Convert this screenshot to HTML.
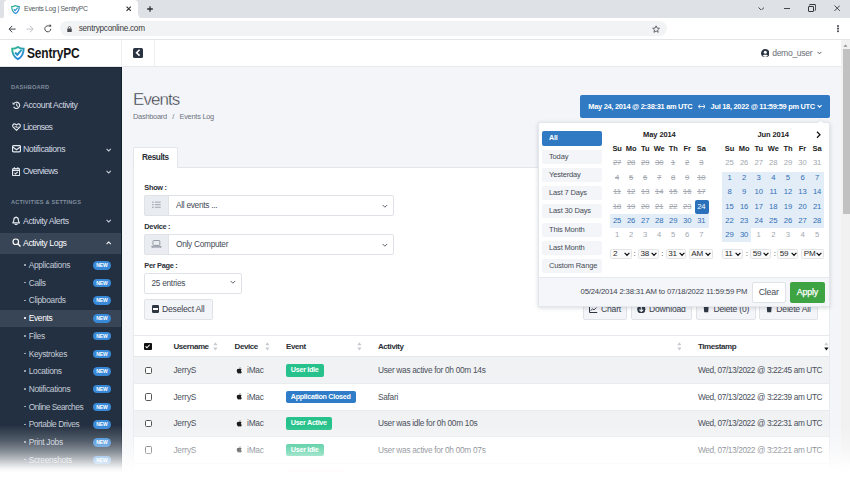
<!DOCTYPE html>
<html><head><meta charset="utf-8"><title>Events Log | SentryPC</title>
<style>
*{box-sizing:border-box;margin:0;padding:0}
html,body{width:850px;height:478px;overflow:hidden;background:#f4f5f8;font-family:"Liberation Sans",Arial,sans-serif;color:#333;}
.a{position:absolute;white-space:nowrap;line-height:1}
#tabs{left:0;top:0;width:850px;height:18px;background:#dee1e6}
#tab{left:4px;top:0;width:134px;height:18px;background:#fff;border-radius:4px 4px 0 0}
#tool{left:0;top:18px;width:850px;height:22px;background:#fff;border-bottom:1px solid #e4e5e7}
#url{left:60px;top:21.300px;width:606.500px;height:14.700px;border-radius:8px;background:#f1f3f4}
#hdr{left:0;top:40px;width:841px;height:27px;background:#fff;border-bottom:1px solid #e6e8ec}
#side{left:0;top:67px;width:121.700px;height:411px;background:#233041;border-right:1px solid #131e2d;border-top:1px solid #182433}
#sb{left:841px;top:40px;width:9px;height:439px;background:#f1f1f1}
#sbt{left:842.600px;top:49px;width:8px;height:165px;background:#c1c1c1}
.sec{font-size:5.6px;font-weight:bold;color:#7f8c9d;letter-spacing:.2px;left:11px;margin-top:.7px}
.mi{font-size:8.7px;color:#d3dae3;left:23px;letter-spacing:-.4px}
.si{font-size:8.4px;color:#c3ccd7;left:28.700px;letter-spacing:-.31px}
.dot{left:24px;margin-top:.300px;width:1.500px;height:1.500px;border-radius:50%;background:#aeb8c4}
.new{left:93px;width:18px;height:8.5px;border-radius:5px;background:#3889d8;color:#fff;font-size:5px;font-weight:bold;text-align:center;line-height:8.5px;letter-spacing:-.1px}
.chev{left:106.5px;width:5px;height:5px}

.lbl{left:144.300px;font-size:7.4px;font-weight:bold;color:#2b2f36;letter-spacing:-.3px;margin-top:.9px}
.sel{background:#fff;border:1px solid #dfe3e8;border-radius:2px}
.pre{width:25.400px;background:#e9ecf1;border:1px solid #dfe3e8;border-radius:2px 0 0 2px}
.st{font-size:8.3px;color:#444b57;letter-spacing:-.28px}
.btn{background:#f4f5f8;border:1px solid #dfe3e8;border-radius:2px}
.bt{font-size:8.6px;color:#3c4350;letter-spacing:-.2px}
.row{left:134px;width:694.500px;height:26.200px;background:#f1f2f3}
.th{font-size:8px;font-weight:bold;color:#2b2f36;letter-spacing:-.43px;margin-top:.5px}
.td{font-size:8.3px;color:#4a505c;letter-spacing:-.2px}
.cb{left:144.500px;width:7.500px;height:7.500px;border:1px solid #555;border-radius:1.600px;background:#fff}
.bdg{height:12.400px;border-radius:2px;color:#fff;font-size:7.2px;font-weight:bold;line-height:12.400px;text-align:center;letter-spacing:-.3px}

.dbt{font-size:7.4px;font-weight:bold;color:#fff;letter-spacing:-.27px}
.rg{left:542.400px;width:59.900px;height:14px;background:#f4f5f8;border-radius:2px;font-size:7.5px;color:#444b57;line-height:14px;padding-left:6.600px;letter-spacing:-.15px}
.cth{font-size:7.5px;font-weight:bold;color:#222;text-align:center;letter-spacing:-.1px}
.cd{font-size:7.7px;text-align:center;letter-spacing:-.1px}
.d{color:#a3a8b0;text-decoration:line-through}
.off{color:#a3a8b0}
.in{color:#2f6fb5}
.act{color:#fff}
.ts{height:10.300px;border:1px solid #e2e4e8;border-radius:1.500px;background:#fafafa;margin-top:-.500px}
.tst{font-size:8.100px;color:#2a2a2a;letter-spacing:-.3px;margin-top:-.200px}
.tm{letter-spacing:-.4px}
.ac{letter-spacing:-.29px}
</style></head><body>
<div class="a" id="tabs"></div>
<div class="a" id="tab"></div>
<div class="a" id="tool"></div>
<div class="a" id="url"></div>
<div class="a" style="left:24.1px;top:5.5px;font-size:6.9px;color:#54585d;letter-spacing:-.28px">Events Log | SentryPC</div>
<div class="a" style="left:0.5px;top:14.5px;width:3.5px;height:3.5px;background:radial-gradient(circle at 0 0,#dee1e6 3.4px,#fff 3.6px)"></div>
<div class="a" style="left:138px;top:14.5px;width:3.5px;height:3.5px;background:radial-gradient(circle at 100% 0,#dee1e6 3.4px,#fff 3.6px)"></div>
<svg class="a" style="left:10.9px;top:5.2px" width="9" height="9" viewBox="0 0 18 18"><defs><linearGradient id="g1" x1="0" y1="0" x2="0.6" y2="1"><stop offset="0" stop-color="#2fb98a"/><stop offset="1" stop-color="#2585e0"/></linearGradient></defs><path d="M9 1.2 C6.5 3 4 3.4 1.5 3.4 C1.5 9.5 3.5 14 9 17 C14.5 14 16.5 9.500 16.5 3.4 C14 3.4 11.5 3 9 1.2 Z" fill="none" stroke="url(#g1)" stroke-width="2.4"/><path d="M5.5 8.500 L8.2 11.2 L13.5 5.2" fill="none" stroke="url(#g1)" stroke-width="2.2"/></svg>
<svg class="a" style="left:125.6px;top:6.4px" width="5.4" height="5.4" viewBox="0 0 10 10"><path d="M1 1 L9 9 M9 1 L1 9" stroke="#2c2f33" stroke-width="2.100"/></svg>
<svg class="a" style="left:146.7px;top:6px" width="6" height="6" viewBox="0 0 10 10"><path d="M5 0.300 V9.700 M0.300 5 H9.700" stroke="#2c2f33" stroke-width="2.100"/></svg>
<svg class="a" style="left:8.100px;top:24.600px" width="8.200" height="8.200" viewBox="0 0 14 14"><path d="M7.200 1.500 L1.800 7 L7.200 12.500 M2 7 H13" stroke="#3f4347" stroke-width="1.700" fill="none"/></svg>
<svg class="a" style="left:26.100px;top:24.600px" width="8.200" height="8.200" viewBox="0 0 14 14"><path d="M6.800 1.500 L12.200 7 L6.800 12.500 M12 7 H1" stroke="#c0c2c6" stroke-width="1.700" fill="none"/></svg>
<svg class="a" style="left:43px;top:23.900px" width="9.600" height="9.600" viewBox="0 0 16 16"><path d="M13 8 A5 5 0 1 1 11.200 4.200" stroke="#3f4347" stroke-width="1.600" fill="none"/><path d="M9.300 1.200 H13.600 V5.500 Z" fill="#3f4347"/></svg>
<svg class="a" style="left:67.200px;top:25.800px" width="5" height="6" viewBox="0 0 10 12"><rect x="0.500" y="5" width="9" height="7" rx="1" fill="#4a4e53"/><path d="M2.600 5.500 V3.500 A2.400 2.400 0 0 1 7.400 3.500 V5.500" stroke="#4a4e53" stroke-width="1.500" fill="none"/></svg>

<div class="a" style="left:78.7px;top:24.4px;font-size:8.2px;color:#3a3d41;letter-spacing:-.25px;top:24.9px">sentrypconline.com</div>
<div class="a" id="hdr"></div>
<div class="a" id="sb"></div><div class="a" id="sbt"></div>
<div class="a" style="left:121px;top:39px;width:1px;height:28px;background:#eceef1"></div>
<div class="a" style="left:154px;top:39px;width:1px;height:28px;background:#eceef1"></div>
<div class="a" style="left:26.600px;top:46.500px;font-size:13.9px;font-weight:bold;color:#161616;letter-spacing:-.2px;transform:scaleX(.86);transform-origin:0 0">SentryPC</div>
<svg class="a" style="left:10.900px;top:46.300px" width="13.8" height="14" viewBox="0 0 18 18"><path d="M9 1.200 C6.500 3 4 3.400 1.500 3.400 C1.500 9.500 3.500 14 9 17 C14.500 14 16.500 9.500 16.500 3.400 C14 3.400 11.500 3 9 1.200 Z" fill="none" stroke="url(#g1)" stroke-width="2.500"/><path d="M5.300 8.300 L8.200 11.200 L13.700 5" fill="none" stroke="url(#g1)" stroke-width="2.600"/></svg>
<div class="a" style="left:133.100px;top:48.400px;width:10px;height:9.400px;background:#2a3341;border-radius:1.500px"></div>
<svg class="a" style="left:135px;top:49.400px" width="5.600" height="7.400" viewBox="0 0 10 13"><path d="M8.200 1.200 L2.800 6.500 L8.200 11.800" stroke="#fff" stroke-width="2.800" fill="none"/></svg>

<div class="a" style="left:772.2px;top:48.6px;font-size:8.6px;color:#6b7078;letter-spacing:-.32px">demo_user</div>
<svg class="a" style="left:760.8px;top:48.6px" width="8.600" height="8.600" viewBox="0 0 20 20"><circle cx="10" cy="10" r="10" fill="#2a3341"/><circle cx="10" cy="7.600" r="3.500" fill="#fff"/><path d="M3.800 15.800 C5 12.200 15 12.200 16.200 15.800 C13.500 18.800 6.500 18.800 3.800 15.800 Z" fill="#fff"/></svg>
<svg class="a" style="left:816.600px;top:51.200px" width="5" height="4" viewBox="0 0 9 7"><path d="M1 1.500 L4.500 5 L8 1.500" stroke="#555b66" stroke-width="1.800" fill="none"/></svg>
<svg class="a" style="left:757.800px;top:6.700px" width="6.600" height="3.800" viewBox="0 0 13 7.500"><path d="M1 1 L6.500 6.300 L12 1" stroke="#33373c" stroke-width="1.800" fill="none"/></svg>
<div class="a" style="left:783.800px;top:8px;width:6.200px;height:1px;background:#45494e"></div>
<div class="a" style="left:808.200px;top:6.400px;width:5.600px;height:5.600px;border:1px solid #33373c;border-radius:1px;box-shadow:1.200px -1.200px 0 -0.100px #dee1e6, 1.500px -1.500px 0 0.400px #33373c"></div>
<svg class="a" style="left:833.800px;top:5.400px" width="6.400" height="6.400" viewBox="0 0 10 10"><path d="M0.800 0.800 L9.200 9.200 M9.200 0.800 L0.800 9.200" stroke="#33373c" stroke-width="1.400"/></svg>
<svg class="a" style="left:652.400px;top:24.800px" width="8.200" height="8.200" viewBox="0 0 24 24"><path d="M12 2.500 L14.900 9 L22 9.700 L16.600 14.400 L18.200 21.400 L12 17.700 L5.800 21.400 L7.400 14.400 L2 9.700 L9.100 9 Z" fill="none" stroke="#45494e" stroke-width="2.300" stroke-linejoin="round"/></svg>
<div class="a" style="left:836.800px;top:25.400px;width:1.800px;height:1.800px;border-radius:50%;background:#45494e;box-shadow:0 2.600px 0 #45494e,0 5.200px 0 #45494e"></div>
<svg class="a" style="left:843px;top:43.500px" width="5" height="3" viewBox="0 0 10 6"><path d="M1 5.500 L5 1 L9 5.500 Z" fill="#8a8a8a"/></svg>

<div class="a" id="side"></div>

<div class="a sec" style="top:84px">DASHBOARD</div>
<div class="a mi" style="top:101px">Account Activity</div>
<div class="a mi" style="top:123px;letter-spacing:-.62px">Licenses</div>
<div class="a mi" style="top:145px">Notifications</div>
<div class="a mi" style="top:167px;letter-spacing:-.68px">Overviews</div>
<div class="a sec" style="top:199.5px">ACTIVITIES &amp; SETTINGS</div>
<div class="a mi" style="top:216.5px">Activity Alerts</div>
<div class="a" style="left:0;top:232.5px;width:121px;height:21px;background:#384556"></div>
<div class="a mi" style="top:238.5px;color:#fff">Activity Logs</div>
<div class="a" style="left:0;top:309.5px;width:121px;height:17px;background:#384556"></div>

<div class="a si" style="top:261px">Applications</div><div class="a dot" style="top:264px"></div><div class="a new" style="top:261px">NEW</div>
<div class="a si" style="top:278.7px">Calls</div><div class="a dot" style="top:281.7px"></div><div class="a new" style="top:278.7px">NEW</div>
<div class="a si" style="top:296.4px">Clipboards</div><div class="a dot" style="top:299.4px"></div><div class="a new" style="top:296.4px">NEW</div>
<div class="a si" style="top:314.1px;color:#fff">Events</div><div class="a dot" style="top:317.1px;background:#fff"></div><div class="a new" style="top:314.1px">NEW</div>
<div class="a si" style="top:331.8px">Files</div><div class="a dot" style="top:334.8px"></div><div class="a new" style="top:331.8px">NEW</div>
<div class="a si" style="top:349.5px">Keystrokes</div><div class="a dot" style="top:352.5px"></div><div class="a new" style="top:349.5px">NEW</div>
<div class="a si" style="top:367.2px">Locations</div><div class="a dot" style="top:370.2px"></div><div class="a new" style="top:367.2px">NEW</div>
<div class="a si" style="top:384.9px">Notifications</div><div class="a dot" style="top:387.9px"></div><div class="a new" style="top:384.9px">NEW</div>
<div class="a si" style="top:402.6px;letter-spacing:-.5px">Online Searches</div><div class="a dot" style="top:405.6px"></div><div class="a new" style="top:402.6px">NEW</div>
<div class="a si" style="top:420.3px;letter-spacing:-.45px">Portable Drives</div><div class="a dot" style="top:423.3px"></div><div class="a new" style="top:420.3px">NEW</div>
<div class="a si" style="top:438px">Print Jobs</div><div class="a dot" style="top:441px"></div><div class="a new" style="top:438px">NEW</div>
<div class="a si" style="top:455.7px">Screenshots</div><div class="a dot" style="top:458.7px"></div><div class="a new" style="top:455.7px">NEW</div>


<!-- SIDE ICONS -->
<svg class="a" style="left:11.500px;top:100.800px" width="9" height="8.600" viewBox="0 0 18 17"><path d="M3.600 5.200 A6.300 6.300 0 1 1 3.200 11.200" stroke="#e4e9ef" stroke-width="2.28" fill="none"/><path d="M0.800 2.200 L1.600 7.400 L6.600 6.200 Z" fill="#e4e9ef"/><path d="M9.400 4.800 V9 L12 11" stroke="#e4e9ef" stroke-width="2.04" fill="none"/></svg>
<svg class="a" style="left:11.600px;top:122.800px" width="9" height="8" viewBox="0 0 18 16"><path d="M9 14.600 L2.400 8.200 C-0.300 5.200 3 0.200 7 2.400 L9 4 L11 2.400 C15 0.200 18.300 5.200 15.600 8.200 Z" stroke="#e4e9ef" stroke-width="2.28" fill="none" stroke-linejoin="round"/><path d="M4.500 8 H7 L8.200 6 L9.800 9.800 L11 8 H13.500" stroke="#e4e9ef" stroke-width="1.56" fill="none"/></svg>
<svg class="a" style="left:11.600px;top:145.400px" width="9" height="7.400" viewBox="0 0 18 15"><rect x="1" y="1.200" width="16" height="12.600" rx="2" stroke="#e4e9ef" stroke-width="2.40" fill="none"/><path d="M1.500 4 L9 9.600 L16.500 4" stroke="#e4e9ef" stroke-width="2.28" fill="none"/></svg>
<svg class="a" style="left:12px;top:166.800px" width="8.200" height="9.200" viewBox="0 0 16 18"><rect x="1" y="3" width="14" height="14" rx="2" stroke="#e4e9ef" stroke-width="2.40" fill="none"/><path d="M1 6.600 H15" stroke="#e4e9ef" stroke-width="2.64"/><path d="M4.600 0.500 V4 M11.400 0.500 V4" stroke="#e4e9ef" stroke-width="2.40"/><path d="M4.800 11.400 L7 13.600 L11.200 9.400" stroke="#e4e9ef" stroke-width="2.04" fill="none"/></svg>
<svg class="a" style="left:12px;top:215.800px" width="8.200" height="9.400" viewBox="0 0 16 18"><path d="M8 1 V2.500 M8 2.500 C4.500 2.500 3.600 5.200 3.600 7.600 C3.600 10.600 2.600 11.600 1.400 13.200 H14.600 C13.400 11.600 12.400 10.600 12.400 7.600 C12.400 5.200 11.500 2.500 8 2.500 Z" stroke="#e4e9ef" stroke-width="2.28" fill="none" stroke-linejoin="round"/><path d="M6 15 A2 2 0 0 0 10 15" stroke="#e4e9ef" stroke-width="2.16" fill="none"/></svg>
<svg class="a" style="left:11.600px;top:238px" width="9.200" height="9.200" viewBox="0 0 18 18"><circle cx="7.400" cy="7.400" r="5.400" stroke="#fff" stroke-width="2.300" fill="none"/><path d="M11.400 11.400 L16.600 16.600" stroke="#fff" stroke-width="2.600"/></svg>
<svg class="a" style="left:106.300px;top:147.6px" width="5.400" height="4" viewBox="0 0 9 6.500"><path d="M1 1.500 L4.500 5 L8 1.500" stroke="#c9d1db" stroke-width="1.900" fill="none"/></svg>
<svg class="a" style="left:106.300px;top:169.6px" width="5.400" height="4" viewBox="0 0 9 6.500"><path d="M1 1.500 L4.500 5 L8 1.500" stroke="#c9d1db" stroke-width="1.900" fill="none"/></svg>
<svg class="a" style="left:106.300px;top:218.8px" width="5.400" height="4" viewBox="0 0 9 6.500"><path d="M1 1.500 L4.500 5 L8 1.500" stroke="#c9d1db" stroke-width="1.900" fill="none"/></svg>
<svg class="a" style="left:106.300px;top:241px" width="5.400" height="4" viewBox="0 0 9 6.500"><path d="M1 5 L4.500 1.500 L8 5" stroke="#fff" stroke-width="1.700" fill="none"/></svg>
<!-- MAIN -->
<div class="a" style="left:133px;top:91px;font-size:17px;color:#2c313b;letter-spacing:-.95px;-webkit-text-stroke:.4px #f4f5f8">Events</div>
<div class="a" style="left:133px;top:113px;font-size:7.4px;color:#6c7380;letter-spacing:-.25px">Dashboard</div>
<div class="a" style="left:172.300px;top:113px;font-size:7.4px;color:#6c7380">/</div>
<div class="a" style="left:179.500px;top:113px;font-size:7.4px;color:#6c7380;letter-spacing:-.25px">Events Log</div>


<!-- TAB + CARD -->
<div class="a" style="left:133px;top:167.300px;width:696.500px;height:320px;background:#fff;border:1px solid #e9ebef;border-top:1px solid #e3e6ea"></div>
<div class="a" style="left:133px;top:146.500px;width:45px;height:21.800px;background:#fff;border:1px solid #e3e6ea;border-bottom:none;border-radius:2px 2px 0 0"></div>
<div class="a" style="left:142px;top:154px;font-size:8.2px;font-weight:bold;color:#2b2f36;letter-spacing:-.4px">Results</div>

<div class="a lbl" style="top:183px">Show :</div>
<div class="a sel" style="left:144px;top:195px;width:250px;height:20.5px"></div>
<div class="a pre" style="left:144px;top:195px;height:20.5px"></div>
<div class="a st" style="left:176px;top:201px">All events ...</div>
<div class="a lbl" style="top:222px">Device :</div>
<div class="a sel" style="left:144px;top:234px;width:250px;height:20.5px"></div>
<div class="a pre" style="left:144px;top:234px;height:20.5px"></div>
<div class="a st" style="left:176px;top:240px">Only Computer</div>
<div class="a lbl" style="top:261px">Per Page :</div>
<div class="a sel" style="left:144px;top:273px;width:97.5px;height:20.5px"></div>
<div class="a st" style="left:151.5px;top:279px">25 entries</div>
<div class="a btn" style="left:144px;top:299px;width:68.5px;height:20.5px"></div>
<div class="a" style="left:162px;top:305px;font-size:8.6px;color:#3c4350;letter-spacing:-.2px">Deselect All</div>
<div class="a" style="left:151.800px;top:305.400px;width:7.600px;height:7.400px;background:#2f3744;border-radius:1.200px"></div>
<div class="a" style="left:153.200px;top:308.300px;width:4.800px;height:1.600px;background:#fff"></div>


<svg class="a" style="left:152px;top:201.400px" width="9.200" height="7.400" viewBox="0 0 18 14"><path d="M5.600 2 H17 M5.600 7 H17 M5.600 12 H17" stroke="#858c98" stroke-width="1.500"/><circle cx="1.800" cy="2" r="1.300" fill="#858c98"/><circle cx="1.800" cy="7" r="1.300" fill="#858c98"/><circle cx="1.800" cy="12" r="1.300" fill="#858c98"/></svg>
<svg class="a" style="left:151.400px;top:239.800px" width="10.800" height="8.400" viewBox="0 0 22 17"><rect x="4" y="1" width="14" height="10" rx="1.500" stroke="#858c98" stroke-width="1.700" fill="none"/><path d="M1.200 13 H20.800 C20.800 15 19.500 16 18 16 H4 C2.500 16 1.200 15 1.200 13 Z" stroke="#858c98" stroke-width="1.600" fill="none" stroke-linejoin="round"/></svg>
<svg class="a" style="left:381.800px;top:203.600px" width="5.800" height="4.200" viewBox="0 0 9 6.500"><path d="M1 1.500 L4.500 5 L8 1.500" stroke="#5a616d" stroke-width="1.500" fill="none"/></svg>
<svg class="a" style="left:381.800px;top:242.600px" width="5.800" height="4.200" viewBox="0 0 9 6.500"><path d="M1 1.500 L4.500 5 L8 1.500" stroke="#5a616d" stroke-width="1.500" fill="none"/></svg>
<svg class="a" style="left:230.300px;top:280.400px" width="5.800" height="4.200" viewBox="0 0 9 6.500"><path d="M1 1.500 L4.500 5 L8 1.500" stroke="#5a616d" stroke-width="1.500" fill="none"/></svg>
<!-- action buttons behind popup -->
<div class="a btn" style="left:582.600px;top:299px;width:44.700px;height:20.500px"></div>
<div class="a bt" style="left:601px;top:305px">Chart</div>
<svg class="a" style="left:589px;top:305.500px" width="8.500" height="7" viewBox="0 0 17 14"><path d="M1 0.500 V13 H16.500" stroke="#2f3744" stroke-width="2" fill="none"/><path d="M3.500 9.500 L7 5.500 L10 8 L15 3" stroke="#2f3744" stroke-width="1.800" fill="none"/></svg>
<div class="a btn" style="left:630.600px;top:299px;width:61.600px;height:20.500px"></div>
<div class="a bt" style="left:649px;top:305px">Download</div>
<svg class="a" style="left:637px;top:304.800px" width="8.600" height="8.600" viewBox="0 0 18 18"><circle cx="9" cy="9" r="8.500" fill="#2f3744"/><path d="M9 4 V13 M5 9.500 L9 13.500 L13 9.500" stroke="#f4f5f8" stroke-width="2.200" fill="none"/></svg>
<div class="a btn" style="left:696px;top:299px;width:60px;height:20.500px"></div>
<div class="a bt" style="left:713.400px;top:305px">Delete (0)</div>
<svg class="a" style="left:703px;top:305px" width="6.400" height="7.600" viewBox="0 0 13 15"><path d="M0.500 2.200 H12.500 M4.500 0.800 H8.500" stroke="#2f3744" stroke-width="1.600"/><path d="M1.600 4 H11.400 L10.600 14.500 H2.400 Z" fill="#2f3744"/></svg>
<div class="a btn" style="left:758.900px;top:299px;width:58.800px;height:20.500px"></div>
<div class="a bt" style="left:776.300px;top:305px">Delete All</div>
<svg class="a" style="left:766px;top:305px" width="6.400" height="7.600" viewBox="0 0 13 15"><path d="M0.500 2.200 H12.500 M4.500 0.800 H8.500" stroke="#2f3744" stroke-width="1.600"/><path d="M1.600 4 H11.400 L10.600 14.500 H2.400 Z" fill="#2f3744"/></svg>

<!-- TABLE -->
<div class="a" style="left:133px;top:334.800px;width:696px;height:1px;background:#e6e9ed"></div>
<div class="a row" style="top:357.400px"></div>
<div class="a row" style="top:410.300px"></div>
<div class="a" style="left:133px;top:356.400px;width:696px;height:1px;background:#e4e7eb"></div>
<div class="a" style="left:133px;top:383.400px;width:696px;height:1px;background:#e9ecef"></div>
<div class="a" style="left:133px;top:409.800px;width:696px;height:1px;background:#e9ecef"></div>
<div class="a" style="left:133px;top:436.300px;width:696px;height:1px;background:#e9ecef"></div>
<div class="a" style="left:133px;top:462.700px;width:696px;height:1px;background:#e9ecef"></div>

<div class="a th" style="left:173.400px;top:342.700px">Username</div>
<div class="a th" style="left:234.600px;top:342.700px">Device</div>
<div class="a th" style="left:286px;top:342.700px">Event</div>
<div class="a th" style="left:378px;top:342.700px">Activity</div>
<div class="a th" style="left:698px;top:342.700px">Timestamp</div>
<div class="a cb" style="top:366.7px"></div>
<div class="a td" style="left:173.400px;top:366.4px">JerryS</div>
<div class="a td" style="left:247px;top:366.4px">iMac</div>
<div class="a bdg" style="left:285.600px;top:364.4px;width:38.2px;background:#27c28b">User Idle</div>
<div class="a td ac" style="left:378px;top:366.4px">User was active for 0h 00m 14s</div>
<div class="a td tm" style="left:698px;top:366.4px">Wed, 07/13/2022 @ 3:22:45 am UTC</div>
<div class="a cb" style="top:393.1px"></div>
<div class="a td" style="left:173.400px;top:392.9px">JerryS</div>
<div class="a td" style="left:247px;top:392.9px">iMac</div>
<div class="a bdg" style="left:285.600px;top:390.8px;width:70.1px;background:#2f7cc8">Application Closed</div>
<div class="a td ac" style="left:378px;top:392.9px">Safari</div>
<div class="a td tm" style="left:698px;top:392.9px">Wed, 07/13/2022 @ 3:22:39 am UTC</div>
<div class="a cb" style="top:419.6px"></div>
<div class="a td" style="left:173.400px;top:419.3px">JerryS</div>
<div class="a td" style="left:247px;top:419.3px">iMac</div>
<div class="a bdg" style="left:285.600px;top:417.3px;width:46.4px;background:#27c28b">User Active</div>
<div class="a td ac" style="left:378px;top:419.3px">User was idle for 0h 00m 10s</div>
<div class="a td tm" style="left:698px;top:419.3px">Wed, 07/13/2022 @ 3:22:31 am UTC</div>
<div class="a cb" style="top:446.1px"></div>
<div class="a td" style="left:173.400px;top:445.8px">JerryS</div>
<div class="a td" style="left:247px;top:445.8px">iMac</div>
<div class="a bdg" style="left:285.600px;top:443.8px;width:38.2px;background:#27c28b">User Idle</div>
<div class="a td ac" style="left:378px;top:445.8px">User was active for 0h 00m 07s</div>
<div class="a td tm" style="left:698px;top:445.8px">Wed, 07/13/2022 @ 3:22:21 am UTC</div>
<div class="a bdg" style="left:285.600px;top:470.400px;width:60px;background:#f4694b">&nbsp;</div>

<div class="a" style="left:144.400px;top:343.100px;width:7.200px;height:7px;background:#111;border-radius:1px"></div>
<svg class="a" style="left:145.400px;top:344.300px" width="5.200" height="4.600" viewBox="0 0 10 9"><path d="M1 4.500 L3.800 7.300 L9 1.500" stroke="#fff" stroke-width="2" fill="none"/></svg>
<svg class="a" style="left:213.1px;top:342.200px" width="4.800" height="8.800" viewBox="0 0 10 18"><path d="M5 0.500 L9.500 6.500 H0.500 Z" fill="#c7cad0"/><path d="M5 17.500 L9.500 11.500 H0.500 Z" fill="#c7cad0"/></svg>
<svg class="a" style="left:264.9px;top:342.200px" width="4.800" height="8.800" viewBox="0 0 10 18"><path d="M5 0.500 L9.500 6.500 H0.500 Z" fill="#c7cad0"/><path d="M5 17.500 L9.500 11.500 H0.500 Z" fill="#c7cad0"/></svg>
<svg class="a" style="left:356.8px;top:342.200px" width="4.800" height="8.800" viewBox="0 0 10 18"><path d="M5 0.500 L9.500 6.500 H0.500 Z" fill="#c7cad0"/><path d="M5 17.500 L9.500 11.500 H0.500 Z" fill="#c7cad0"/></svg>
<svg class="a" style="left:676.6px;top:342.200px" width="4.800" height="8.800" viewBox="0 0 10 18"><path d="M5 0.500 L9.500 6.500 H0.500 Z" fill="#c7cad0"/><path d="M5 17.500 L9.500 11.500 H0.500 Z" fill="#c7cad0"/></svg>
<svg class="a" style="left:824px;top:342.200px" width="4.800" height="8.800" viewBox="0 0 10 18"><path d="M5 0.500 L9.500 6.500 H0.500 Z" fill="#c7cad0"/><path d="M5 17.500 L9.500 11.500 H0.500 Z" fill="#111"/></svg>
<svg class="a" style="left:236px;top:367.0px" width="6.400" height="6.800" viewBox="0 0 16 18"><path d="M12.700 9.600 C12.700 7.500 14.400 6.500 14.500 6.400 C13.500 5 12 4.800 11.500 4.800 C10.200 4.700 9 5.600 8.400 5.600 C7.800 5.600 6.800 4.800 5.700 4.800 C4.300 4.800 3 5.600 2.300 6.900 C0.800 9.400 1.900 13.200 3.300 15.300 C4 16.300 4.800 17.400 5.900 17.400 C7 17.400 7.400 16.700 8.700 16.700 C10 16.700 10.300 17.400 11.500 17.400 C12.600 17.400 13.400 16.400 14.100 15.300 C14.900 14.100 15.200 13 15.200 12.900 C15.200 12.900 12.700 12 12.700 9.600 Z M10.600 3.200 C11.200 2.500 11.600 1.500 11.500 0.500 C10.600 0.500 9.600 1.100 9 1.800 C8.400 2.400 7.900 3.500 8.100 4.400 C9 4.500 10 3.900 10.600 3.200 Z" fill="#1c1c1c"/></svg>
<svg class="a" style="left:236px;top:393.4px" width="6.400" height="6.800" viewBox="0 0 16 18"><path d="M12.700 9.600 C12.700 7.500 14.400 6.500 14.500 6.400 C13.500 5 12 4.800 11.500 4.800 C10.200 4.700 9 5.600 8.400 5.600 C7.800 5.600 6.800 4.800 5.700 4.800 C4.300 4.800 3 5.600 2.300 6.900 C0.800 9.400 1.900 13.200 3.300 15.300 C4 16.300 4.800 17.400 5.900 17.400 C7 17.400 7.400 16.700 8.700 16.700 C10 16.700 10.300 17.400 11.500 17.400 C12.600 17.400 13.400 16.400 14.100 15.300 C14.900 14.100 15.200 13 15.200 12.900 C15.200 12.900 12.700 12 12.700 9.600 Z M10.600 3.200 C11.200 2.500 11.600 1.500 11.500 0.500 C10.600 0.500 9.600 1.100 9 1.800 C8.400 2.400 7.900 3.500 8.100 4.400 C9 4.500 10 3.900 10.600 3.200 Z" fill="#1c1c1c"/></svg>
<svg class="a" style="left:236px;top:419.9px" width="6.400" height="6.800" viewBox="0 0 16 18"><path d="M12.700 9.600 C12.700 7.500 14.400 6.500 14.500 6.400 C13.500 5 12 4.800 11.500 4.800 C10.200 4.700 9 5.600 8.400 5.600 C7.800 5.600 6.800 4.800 5.700 4.800 C4.300 4.800 3 5.600 2.300 6.900 C0.800 9.400 1.900 13.200 3.300 15.300 C4 16.300 4.800 17.400 5.900 17.400 C7 17.400 7.400 16.700 8.700 16.700 C10 16.700 10.300 17.400 11.500 17.400 C12.600 17.400 13.400 16.400 14.100 15.300 C14.900 14.100 15.200 13 15.200 12.900 C15.200 12.900 12.700 12 12.700 9.600 Z M10.600 3.200 C11.200 2.500 11.600 1.500 11.500 0.500 C10.600 0.500 9.600 1.100 9 1.800 C8.400 2.400 7.900 3.500 8.100 4.400 C9 4.500 10 3.900 10.600 3.200 Z" fill="#1c1c1c"/></svg>
<svg class="a" style="left:236px;top:446.4px" width="6.400" height="6.800" viewBox="0 0 16 18"><path d="M12.700 9.600 C12.700 7.500 14.400 6.500 14.500 6.400 C13.500 5 12 4.800 11.500 4.800 C10.200 4.700 9 5.600 8.400 5.600 C7.800 5.600 6.800 4.800 5.700 4.800 C4.300 4.800 3 5.600 2.300 6.900 C0.800 9.400 1.900 13.200 3.300 15.300 C4 16.300 4.800 17.400 5.900 17.400 C7 17.400 7.400 16.700 8.700 16.700 C10 16.700 10.300 17.400 11.500 17.400 C12.600 17.400 13.400 16.400 14.100 15.300 C14.900 14.100 15.200 13 15.200 12.900 C15.200 12.900 12.700 12 12.700 9.600 Z M10.600 3.200 C11.200 2.500 11.600 1.500 11.500 0.500 C10.600 0.500 9.600 1.100 9 1.800 C8.400 2.400 7.900 3.500 8.100 4.400 C9 4.500 10 3.900 10.600 3.200 Z" fill="#1c1c1c"/></svg>
<!-- DATE BUTTON -->
<div class="a" style="left:579.600px;top:94.800px;width:250.100px;height:23.600px;background:#2f7ac3;border-radius:2px"></div>
<div class="a dbt" style="left:588.3px;top:102.5px">May 24, 2014 @ 2:38:31 am UTC</div>
<div class="a dbt" style="left:710.6px;top:102.5px">Jul 18, 2022 @ 11:59:59 pm UTC</div>
<svg class="a" style="left:697.5px;top:104px" width="7.5" height="5" viewBox="0 0 15 10"><path d="M4 1 L0.8 5 L4 9 M11 1 L14.2 5 L11 9 M1.5 5 H13.5" stroke="#fff" stroke-width="1.8" fill="none"/></svg>
<svg class="a" style="left:816.600px;top:104.400px" width="5.200" height="4.600" viewBox="0 0 9 8"><path d="M1 2 L4.500 5.500 L8 2" stroke="#fff" stroke-width="2" fill="none"/></svg>

<!-- POPUP -->
<div class="a" style="left:538.200px;top:122px;width:291.400px;height:185px;background:#fff;border:1px solid #e3e6ea;border-radius:2px;box-shadow:0 1px 4px rgba(40,50,70,.18)"></div>
<div class="a" style="left:818px;top:119.5px;width:5px;height:5px;background:#fff;transform:rotate(45deg);border-left:1px solid #e3e6ea;border-top:1px solid #e3e6ea"></div>
<div class="a" style="left:539.200px;top:276.800px;width:289.400px;height:29.200px;background:#f5f6f9;border-top:1px solid #e6e9ed"></div>
<div class="a rg" style="top:131.200px;height:14.700px;line-height:14.700px;background:#2f7ac3;color:#fff;font-weight:bold;font-size:7.1px">All</div>
<div class="a rg" style="top:149.7px">Today</div>
<div class="a rg" style="top:168.0px">Yesterday</div>
<div class="a rg" style="top:186.2px">Last 7 Days</div>
<div class="a rg" style="top:204.4px">Last 30 Days</div>
<div class="a rg" style="top:222.7px">This Month</div>
<div class="a rg" style="top:240.9px">Last Month</div>
<div class="a rg" style="top:259.1px">Custom Range</div>
<div class="a cth" style="left:629.4px;top:131px;width:60px">May 2014</div>
<div class="a cth" style="left:610.1px;top:145px;width:14.03px">Su</div>
<div class="a cth" style="left:624.1px;top:145px;width:14.03px">Mo</div>
<div class="a cth" style="left:638.2px;top:145px;width:14.03px">Tu</div>
<div class="a cth" style="left:652.2px;top:145px;width:14.03px">We</div>
<div class="a cth" style="left:666.2px;top:145px;width:14.03px">Th</div>
<div class="a cth" style="left:680.2px;top:145px;width:14.03px">Fr</div>
<div class="a cth" style="left:694.3px;top:145px;width:14.03px">Sa</div>
<div class="a cth" style="left:743.2px;top:131px;width:60px">Jun 2014</div>
<div class="a cth" style="left:722.2px;top:145px;width:14.6px">Su</div>
<div class="a cth" style="left:736.8px;top:145px;width:14.6px">Mo</div>
<div class="a cth" style="left:751.4px;top:145px;width:14.6px">Tu</div>
<div class="a cth" style="left:766.0px;top:145px;width:14.6px">We</div>
<div class="a cth" style="left:780.6px;top:145px;width:14.6px">Th</div>
<div class="a cth" style="left:795.2px;top:145px;width:14.6px">Fr</div>
<div class="a cth" style="left:809.8px;top:145px;width:14.6px">Sa</div>
<div class="a" style="left:610.1px;top:214.2px;width:98.6px;height:13.6px;background:#e3edf8"></div>
<div class="a" style="left:722.2px;top:171.5px;width:102.3px;height:56.3px;background:#e3edf8"></div>
<div class="a" style="left:722.2px;top:227.7px;width:29px;height:14.4px;background:#e3edf8"></div>
<div class="a" style="left:695px;top:200px;width:13.8px;height:14px;background:#2b70ba;border-radius:2px"></div>
<div class="a cd d" style="left:610.1px;top:159.34px;width:14.03px">27</div><div class="a cd d" style="left:624.1px;top:159.34px;width:14.03px">28</div><div class="a cd d" style="left:638.2px;top:159.34px;width:14.03px">29</div><div class="a cd d" style="left:652.2px;top:159.34px;width:14.03px">30</div><div class="a cd d" style="left:666.2px;top:159.34px;width:14.03px">1</div><div class="a cd d" style="left:680.2px;top:159.34px;width:14.03px">2</div><div class="a cd d" style="left:694.3px;top:159.34px;width:14.03px">3</div>
<div class="a cd d" style="left:610.1px;top:173.76px;width:14.03px">4</div><div class="a cd d" style="left:624.1px;top:173.76px;width:14.03px">5</div><div class="a cd d" style="left:638.2px;top:173.76px;width:14.03px">6</div><div class="a cd d" style="left:652.2px;top:173.76px;width:14.03px">7</div><div class="a cd d" style="left:666.2px;top:173.76px;width:14.03px">8</div><div class="a cd d" style="left:680.2px;top:173.76px;width:14.03px">9</div><div class="a cd d" style="left:694.3px;top:173.76px;width:14.03px">10</div>
<div class="a cd d" style="left:610.1px;top:188.18px;width:14.03px">11</div><div class="a cd d" style="left:624.1px;top:188.18px;width:14.03px">12</div><div class="a cd d" style="left:638.2px;top:188.18px;width:14.03px">13</div><div class="a cd d" style="left:652.2px;top:188.18px;width:14.03px">14</div><div class="a cd d" style="left:666.2px;top:188.18px;width:14.03px">15</div><div class="a cd d" style="left:680.2px;top:188.18px;width:14.03px">16</div><div class="a cd d" style="left:694.3px;top:188.18px;width:14.03px">17</div>
<div class="a cd d" style="left:610.1px;top:202.60px;width:14.03px">18</div><div class="a cd d" style="left:624.1px;top:202.60px;width:14.03px">19</div><div class="a cd d" style="left:638.2px;top:202.60px;width:14.03px">20</div><div class="a cd d" style="left:652.2px;top:202.60px;width:14.03px">21</div><div class="a cd d" style="left:666.2px;top:202.60px;width:14.03px">22</div><div class="a cd d" style="left:680.2px;top:202.60px;width:14.03px">23</div><div class="a cd act" style="left:694.3px;top:202.60px;width:14.03px">24</div>
<div class="a cd in" style="left:610.1px;top:217.02px;width:14.03px">25</div><div class="a cd in" style="left:624.1px;top:217.02px;width:14.03px">26</div><div class="a cd in" style="left:638.2px;top:217.02px;width:14.03px">27</div><div class="a cd in" style="left:652.2px;top:217.02px;width:14.03px">28</div><div class="a cd in" style="left:666.2px;top:217.02px;width:14.03px">29</div><div class="a cd in" style="left:680.2px;top:217.02px;width:14.03px">30</div><div class="a cd in" style="left:694.3px;top:217.02px;width:14.03px">31</div>
<div class="a cd off" style="left:610.1px;top:231.44px;width:14.03px">1</div><div class="a cd off" style="left:624.1px;top:231.44px;width:14.03px">2</div><div class="a cd off" style="left:638.2px;top:231.44px;width:14.03px">3</div><div class="a cd off" style="left:652.2px;top:231.44px;width:14.03px">4</div><div class="a cd off" style="left:666.2px;top:231.44px;width:14.03px">5</div><div class="a cd off" style="left:680.2px;top:231.44px;width:14.03px">6</div><div class="a cd off" style="left:694.3px;top:231.44px;width:14.03px">7</div>
<div class="a cd off" style="left:722.2px;top:159.34px;width:14.6px">25</div><div class="a cd off" style="left:736.8px;top:159.34px;width:14.6px">26</div><div class="a cd off" style="left:751.4px;top:159.34px;width:14.6px">27</div><div class="a cd off" style="left:766.0px;top:159.34px;width:14.6px">28</div><div class="a cd off" style="left:780.6px;top:159.34px;width:14.6px">29</div><div class="a cd off" style="left:795.2px;top:159.34px;width:14.6px">30</div><div class="a cd off" style="left:809.8px;top:159.34px;width:14.6px">31</div>
<div class="a cd in" style="left:722.2px;top:173.76px;width:14.6px">1</div><div class="a cd in" style="left:736.8px;top:173.76px;width:14.6px">2</div><div class="a cd in" style="left:751.4px;top:173.76px;width:14.6px">3</div><div class="a cd in" style="left:766.0px;top:173.76px;width:14.6px">4</div><div class="a cd in" style="left:780.6px;top:173.76px;width:14.6px">5</div><div class="a cd in" style="left:795.2px;top:173.76px;width:14.6px">6</div><div class="a cd in" style="left:809.8px;top:173.76px;width:14.6px">7</div>
<div class="a cd in" style="left:722.2px;top:188.18px;width:14.6px">8</div><div class="a cd in" style="left:736.8px;top:188.18px;width:14.6px">9</div><div class="a cd in" style="left:751.4px;top:188.18px;width:14.6px">10</div><div class="a cd in" style="left:766.0px;top:188.18px;width:14.6px">11</div><div class="a cd in" style="left:780.6px;top:188.18px;width:14.6px">12</div><div class="a cd in" style="left:795.2px;top:188.18px;width:14.6px">13</div><div class="a cd in" style="left:809.8px;top:188.18px;width:14.6px">14</div>
<div class="a cd in" style="left:722.2px;top:202.60px;width:14.6px">15</div><div class="a cd in" style="left:736.8px;top:202.60px;width:14.6px">16</div><div class="a cd in" style="left:751.4px;top:202.60px;width:14.6px">17</div><div class="a cd in" style="left:766.0px;top:202.60px;width:14.6px">18</div><div class="a cd in" style="left:780.6px;top:202.60px;width:14.6px">19</div><div class="a cd in" style="left:795.2px;top:202.60px;width:14.6px">20</div><div class="a cd in" style="left:809.8px;top:202.60px;width:14.6px">21</div>
<div class="a cd in" style="left:722.2px;top:217.02px;width:14.6px">22</div><div class="a cd in" style="left:736.8px;top:217.02px;width:14.6px">23</div><div class="a cd in" style="left:751.4px;top:217.02px;width:14.6px">24</div><div class="a cd in" style="left:766.0px;top:217.02px;width:14.6px">25</div><div class="a cd in" style="left:780.6px;top:217.02px;width:14.6px">26</div><div class="a cd in" style="left:795.2px;top:217.02px;width:14.6px">27</div><div class="a cd in" style="left:809.8px;top:217.02px;width:14.6px">28</div>
<div class="a cd in" style="left:722.2px;top:231.44px;width:14.6px">29</div><div class="a cd in" style="left:736.8px;top:231.44px;width:14.6px">30</div><div class="a cd off" style="left:751.4px;top:231.44px;width:14.6px">1</div><div class="a cd off" style="left:766.0px;top:231.44px;width:14.6px">2</div><div class="a cd off" style="left:780.6px;top:231.44px;width:14.6px">3</div><div class="a cd off" style="left:795.2px;top:231.44px;width:14.6px">4</div><div class="a cd off" style="left:809.8px;top:231.44px;width:14.6px">5</div>
<div class="a ts" style="left:610.4px;top:249px;width:21.8px"></div><div class="a tst" style="left:612.9px;top:250px">2</div><svg class="a" style="left:624.1999999999999px;top:252px" width="6" height="4.8" viewBox="0 0 10 8"><path d="M1 1.5 L5 5.5 L9 1.5" stroke="#111" stroke-width="2" fill="none"/></svg>
<div class="a ts" style="left:638px;top:249px;width:21.4px"></div><div class="a tst" style="left:640.5px;top:250px">38</div><svg class="a" style="left:651.4px;top:252px" width="6" height="4.8" viewBox="0 0 10 8"><path d="M1 1.5 L5 5.5 L9 1.5" stroke="#111" stroke-width="2" fill="none"/></svg>
<div class="a ts" style="left:665.7px;top:249px;width:20.8px"></div><div class="a tst" style="left:668.2px;top:250px">31</div><svg class="a" style="left:678.5px;top:252px" width="6" height="4.8" viewBox="0 0 10 8"><path d="M1 1.5 L5 5.5 L9 1.5" stroke="#111" stroke-width="2" fill="none"/></svg>
<div class="a ts" style="left:688.8px;top:249px;width:24.2px"></div><div class="a tst" style="left:691.3px;top:250px">AM</div><svg class="a" style="left:705.0px;top:252px" width="6" height="4.8" viewBox="0 0 10 8"><path d="M1 1.5 L5 5.5 L9 1.5" stroke="#111" stroke-width="2" fill="none"/></svg>
<div class="a ts" style="left:722.2px;top:249px;width:20.8px"></div><div class="a tst" style="left:724.7px;top:250px">11</div><svg class="a" style="left:735.0px;top:252px" width="6" height="4.8" viewBox="0 0 10 8"><path d="M1 1.5 L5 5.5 L9 1.5" stroke="#111" stroke-width="2" fill="none"/></svg>
<div class="a ts" style="left:750.3px;top:249px;width:20.7px"></div><div class="a tst" style="left:752.8px;top:250px">59</div><svg class="a" style="left:763.0px;top:252px" width="6" height="4.8" viewBox="0 0 10 8"><path d="M1 1.5 L5 5.5 L9 1.5" stroke="#111" stroke-width="2" fill="none"/></svg>
<div class="a ts" style="left:777.2px;top:249px;width:21.3px"></div><div class="a tst" style="left:779.7px;top:250px">59</div><svg class="a" style="left:790.5px;top:252px" width="6" height="4.8" viewBox="0 0 10 8"><path d="M1 1.5 L5 5.5 L9 1.5" stroke="#111" stroke-width="2" fill="none"/></svg>
<div class="a ts" style="left:801.3px;top:249px;width:23.1px"></div><div class="a tst" style="left:803.8px;top:250px">PM</div><svg class="a" style="left:816.4px;top:252px" width="6" height="4.8" viewBox="0 0 10 8"><path d="M1 1.5 L5 5.5 L9 1.5" stroke="#111" stroke-width="2" fill="none"/></svg>
<div class="a" style="left:633.5px;top:249.5px;font-size:8px;color:#333">:</div><div class="a" style="left:661.1999999999999px;top:249.5px;font-size:8px;color:#333">:</div><div class="a" style="left:745.8px;top:249.5px;font-size:8px;color:#333">:</div><div class="a" style="left:773.8px;top:249.5px;font-size:8px;color:#333">:</div>
<svg class="a" style="left:816px;top:131px" width="5" height="7.5" viewBox="0 0 10 15"><path d="M2 1.5 L8 7.5 L2 13.5" stroke="#111" stroke-width="2.4" fill="none"/></svg>
<div class="a" style="left:580.5px;top:288px;font-size:7.7px;color:#3c4350;letter-spacing:-.15px">05/24/2014 2:38:31 AM to 07/18/2022 11:59:59 PM</div>
<div class="a" style="left:751.800px;top:281.800px;width:33.800px;height:20.800px;background:#fff;border:1px solid #dfe3e8;border-radius:2px"></div>
<div class="a" style="left:751.8px;top:287.5px;width:33.8px;text-align:center;font-size:8.8px;color:#444b57;letter-spacing:-.2px">Clear</div>
<div class="a" style="left:790px;top:281.800px;width:34.700px;height:20.800px;background:#3ea443;border-radius:2px"></div>
<div class="a" style="left:790px;top:287.5px;width:34.7px;text-align:center;font-size:8.8px;color:#fff;letter-spacing:-.2px;-webkit-text-stroke:.25px #fff">Apply</div>
<!-- FADE -->
<div class="a" style="left:0;top:425px;width:850px;height:53px;background:linear-gradient(to bottom,rgba(255,255,255,0) 0%,rgba(255,255,255,.22) 30%,rgba(255,255,255,.45) 50%,rgba(255,255,255,.72) 67%,rgba(255,255,255,.95) 82%,#fff 90%)"></div>
</body></html>
